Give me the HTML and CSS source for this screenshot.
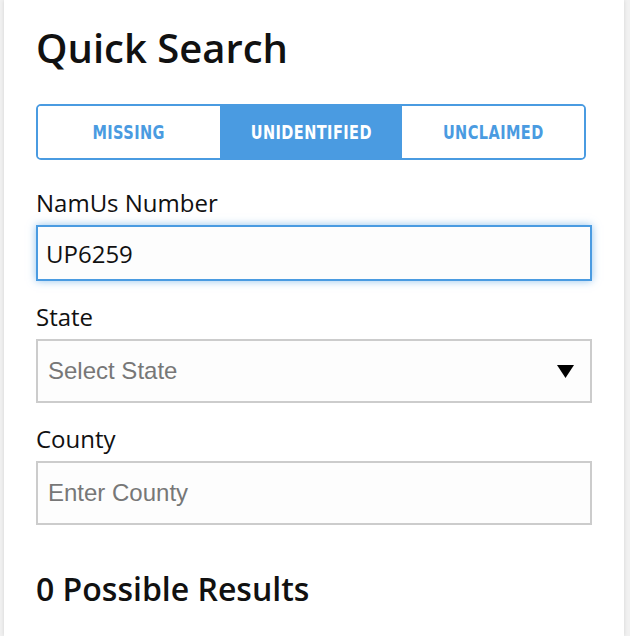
FILE: index.html
```html
<!DOCTYPE html>
<html lang="en">
<head>
<meta charset="UTF-8">
<meta name="viewport" content="width=device-width, initial-scale=1.0">
<title>Quick Search</title>
<link rel="stylesheet" href="styles.css">
</head>
<body>
    <div class="card">
        <h1 class="title">Quick Search</h1>
        <div class="tabs">
            <button class="tab"><span>MISSING</span></button>
            <button class="tab active"><span>UNIDENTIFIED</span></button>
            <button class="tab"><span>UNCLAIMED</span></button>
        </div>

        <label class="field-label first" for="number">NamUs Number</label>
        <input class="field focused" type="text" id="number" value="UP6259">

        <label class="field-label" for="state">State</label>
        <div class="field select" id="state">
            <span class="placeholder">Select State</span>
            <svg class="arrow" width="17" height="13" viewBox="0 0 17 13"><path d="M0 0H17L8.5 13Z" fill="#000"/></svg>
        </div>

        <label class="field-label" for="county">County</label>
        <input class="field" type="text" id="county" placeholder="Enter County">

        <h2 class="results">0 Possible Results</h2>
    </div>
</body>
</html>
```

FILE: styles.css
```css
body {
    margin: 0;
    background-color: #f1f1f1;
    font-family: "Open Sans", sans-serif;
    color: #111;
}
.card {
    margin-left: 4px;
    width: 620px;
    height: 636px;
    background-color: #fff;
    box-shadow: 0 0 4px rgba(0, 0, 0, 0.12);
    padding: 0 32px;
    box-sizing: border-box;
    display: flex;
    flex-direction: column;
    align-items: flex-start;
}
.title {
    font-size: 40px;
    font-weight: 600;
    margin: 20px 0 0 0;
    line-height: 56px;
}
.tabs {
    display: flex;
    width: 550px;
    margin-top: 28px;
    border: 2px solid #4a9be1;
    border-radius: 5px;
    overflow: hidden;
    box-sizing: border-box;
}
.tab {
    flex: 1;
    height: 52px;
    border: none;
    background-color: #fff;
    color: #4a9be1;
    font-family: "DejaVu Sans Condensed", "DejaVu Sans", sans-serif;
    font-weight: bold;
    font-size: 19px;
    letter-spacing: 0.5px;
    padding: 0;
    cursor: pointer;
}
.tab span {
    display: inline-block;
    transform: scaleX(0.85);
}
.tab.active {
    background-color: #4a9be1;
    color: #fff;
}
.field-label {
    font-size: 24px;
    line-height: 30px;
    margin-top: 21px;
    margin-bottom: 7px;
}
.field-label.first {
    margin-top: 28px;
}
.field {
    width: 556px;
    height: 64px;
    box-sizing: border-box;
    border: 2px solid #cccccc;
    background-color: #fdfdfd;
    padding: 0 10px;
    font-family: "Liberation Sans", Arial, sans-serif;
    font-size: 24px;
    color: #111;
    outline: none;
}
.field::placeholder {
    color: #777;
}
.field.focused {
    height: 56px;
    padding: 0 8px;
    border-color: #4a9be1;
    box-shadow: 0 0 8px rgba(74, 155, 225, 0.6);
    font-family: "Open Sans", sans-serif;
}
.select {
    display: flex;
    align-items: center;
    justify-content: space-between;
    padding-right: 16px;
}
.placeholder {
    color: #777;
}
.results {
    font-size: 32px;
    font-weight: 600;
    margin: 42px 0 0 0;
}
```
